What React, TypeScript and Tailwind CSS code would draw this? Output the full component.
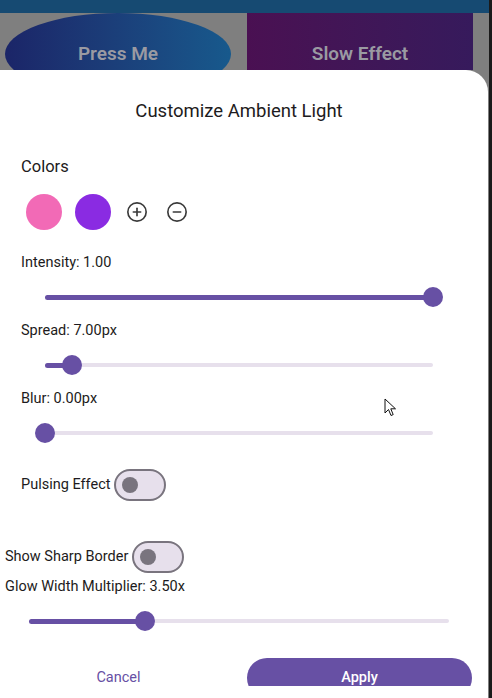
import { CircleMinus, CirclePlus } from "lucide-react";

function Slider({ value, width }: { value: number; width: number }) {
  return (
    <div className="relative h-[40px] flex items-center" style={{ width }}>
      <div className="h-[4px] w-full rounded-full bg-[#e7e0ec]" />
      <div
        className="absolute left-0 h-[5px] rounded-full bg-[#6750a4]"
        style={{ width: width * value }}
      />
      <div
        className="absolute h-[20px] w-[20px] -ml-[10px] rounded-full bg-[#6750a4]"
        style={{ left: width * value }}
      />
    </div>
  );
}

function Toggle() {
  return (
    <div className="h-[32px] w-[52px] rounded-full border-2 border-[#79747e] bg-[#e7e0ec] flex items-center pl-[6px]">
      <div className="h-[16px] w-[16px] rounded-full bg-[#79747e]" />
    </div>
  );
}

function Label({ children }: { children: React.ReactNode }) {
  return <p className="text-[14.5px] leading-[20px] text-[#1d1b20]">{children}</p>;
}

export default function App() {
  return (
    <div
      className="w-[492px] h-[698px] overflow-hidden flex bg-[#7f7f7f]"
      style={{ fontFamily: "Roboto, 'Liberation Sans', sans-serif" }}>
      <div className="w-[489px] flex flex-col">
        <div className="h-[13px] bg-[#164a72]" />
        <div className="h-[57px] overflow-hidden flex items-start">
          <div className="ml-[5px] w-[226px] h-[82px] rounded-[50%] bg-gradient-to-r from-[#1b2568] to-[#17598c] flex items-center justify-center">
            <span className="text-[19px] font-semibold text-[#9a9aa2]">Press Me</span>
          </div>
          <div className="ml-[16px] w-[226px] h-[82px] bg-gradient-to-r from-[#4a1052] to-[#361a5c] flex items-center justify-center">
            <span className="text-[19px] font-semibold text-[#9a9aa2]">Slow Effect</span>
          </div>
        </div>

        <div className="relative -ml-[10px] w-[498px] flex-1 bg-white rounded-tr-[22px]">
          <div className="h-[616px] overflow-hidden flex flex-col">
            <div className="mt-[7px] mx-auto h-[4px] w-[40px] rounded-full bg-[#d6d6d6]" />
            <h1 className="mt-[22px] text-center text-[18.5px] leading-[24px] text-[#1d1b20]">
              Customize Ambient Light
            </h1>

            <div className="pl-[31px] mt-[32px]">
              <p className="text-[16.5px] leading-[24px] text-[#1d1b20]">Colors</p>
              <div className="mt-[15px] flex items-center">
                <div className="ml-[5px] h-[36px] w-[36px] rounded-full bg-[#f26ab6]" />
                <div className="ml-[13px] h-[36px] w-[36px] rounded-full bg-[#8a2be2]" />
                <CirclePlus className="ml-[15px]" size={22} strokeWidth={1.8} color="#3a3a3a" />
                <CircleMinus className="ml-[18px]" size={22} strokeWidth={1.8} color="#3a3a3a" />
              </div>

              <div className="mt-[23px]">
                <Label>Intensity: 1.00</Label>
              </div>
              <div className="mt-[4px] pl-[24px]">
                <Slider value={1} width={388} />
              </div>
              <div className="mt-[4px]">
                <Label>Spread: 7.00px</Label>
              </div>
              <div className="mt-[4px] pl-[24px]">
                <Slider value={0.07} width={388} />
              </div>
              <div className="mt-[4px]">
                <Label>Blur: 0.00px</Label>
              </div>
              <div className="mt-[4px] pl-[24px]">
                <Slider value={0} width={388} />
              </div>

              <div className="mt-[16px] flex items-center gap-[4px]">
                <Label>Pulsing Effect</Label>
                <Toggle />
              </div>
            </div>

            <div className="pl-[15px] mt-[40px]">
              <div className="flex items-center gap-[4px]">
                <Label>Show Sharp Border</Label>
                <Toggle />
              </div>
              <div className="mt-[4px]">
                <Label>Glow Width Multiplier: 3.50x</Label>
              </div>
              <div className="mt-[4px] pl-[24px]">
                <Slider value={0.276} width={420} />
              </div>
            </div>

            <div className="mt-[17px] px-[16px] flex gap-[16px]">
              <button className="flex-1 h-[40px] rounded-full text-[14.5px] text-[#6750a4]">
                Cancel
              </button>
              <button className="flex-1 h-[40px] rounded-full text-[14.5px] font-medium text-white bg-[#6750a4]">
                Apply
              </button>
            </div>
          </div>

          <svg
            className="absolute left-[394px] top-[328px]"
            width="13"
            height="20"
            viewBox="0 0 13 20">
            <path
              d="M1 1 L1 15 L4.5 11.5 L7 17.5 L9.2 16.6 L6.8 10.8 L11.5 10.8 Z"
              fill="white"
              stroke="#111"
              strokeWidth="1"
              strokeLinejoin="round"
            />
          </svg>
        </div>
      </div>
      <div className="w-[3px] bg-[#1a1a1a]" />
    </div>
  );
}
